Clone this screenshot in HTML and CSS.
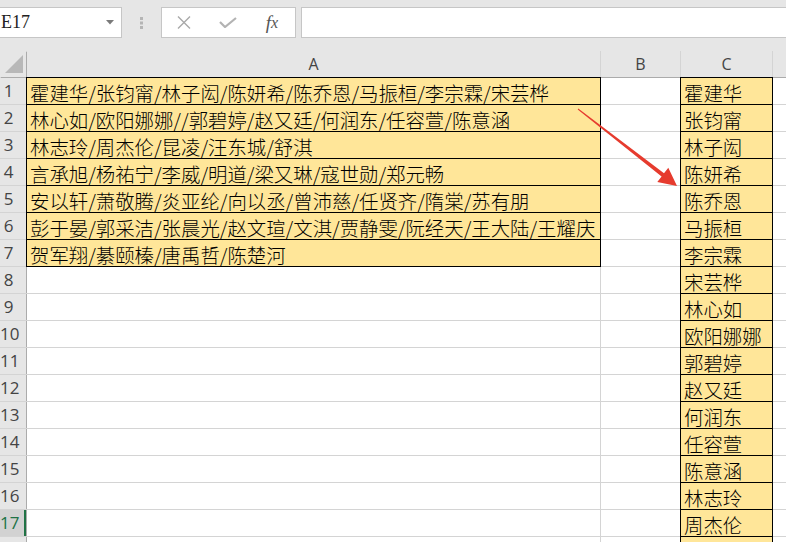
FILE: index.html
```html
<!DOCTYPE html>
<html lang="zh-CN">
<head>
  <meta charset="UTF-8">
  <title>Sheet1</title>
  <link rel="stylesheet" href="styles.css">
</head>

<body>
  <div class="toolbar">
    <div class="namebox">
      <span>E17</span>
      <svg class="drop" width="8" height="5" viewBox="0 0 8 5"><polygon points="0,0 8,0 4,4.5" fill="#7a7a7a"/></svg>
    </div>
    <div class="grip">
      <svg width="3" height="12" viewBox="0 0 3 12">
        <rect x="0" y="0" width="3" height="3" fill="#b5b5b5"/>
        <rect x="0" y="4.5" width="3" height="3" fill="#b5b5b5"/>
        <rect x="0" y="9" width="3" height="3" fill="#b5b5b5"/>
      </svg>
    </div>
    <div class="fbox">
      <span class="slot">
        <svg width="14" height="13" viewBox="0 0 14 13"><path d="M1 0.5 L13 12.5 M13 0.5 L1 12.5" stroke="#a9a9a9" stroke-width="1.4" fill="none"/></svg>
      </span>
      <span class="slot">
        <svg width="18" height="11" viewBox="0 0 18 11"><path d="M1 5 L6 10 L17 1" stroke="#b3b3b3" stroke-width="2.2" fill="none"/></svg>
      </span>
      <span class="slot fx">f<span class="x">x</span></span>
    </div>
    <div class="formula"></div>
  </div>

  <div class="sheet">
    <div class="corner">
      <svg width="26" height="26" viewBox="0 0 26 26"><polygon points="23,4 23,22 5,22" fill="#b8b8b8"/></svg>
    </div>
    <div class="colhead">A</div>
    <div class="colhead">B</div>
    <div class="colhead">C</div>
    <div class="colhead"></div>

    <div class="rh">1</div><div class="cell fill">霍建华/张钧甯/林子闳/陈妍希/陈乔恩/马振桓/李宗霖/宋芸桦</div><div class="cell"></div><div class="cell fill">霍建华</div><div class="cell"></div>
    <div class="rh">2</div><div class="cell fill">林心如/欧阳娜娜//郭碧婷/赵又廷/何润东/任容萱/陈意涵</div><div class="cell"></div><div class="cell fill">张钧甯</div><div class="cell"></div>
    <div class="rh">3</div><div class="cell fill">林志玲/周杰伦/昆凌/汪东城/舒淇</div><div class="cell"></div><div class="cell fill">林子闳</div><div class="cell"></div>
    <div class="rh">4</div><div class="cell fill">言承旭/杨祐宁/李威/明道/梁又琳/寇世勋/郑元畅</div><div class="cell"></div><div class="cell fill">陈妍希</div><div class="cell"></div>
    <div class="rh">5</div><div class="cell fill">安以轩/萧敬腾/炎亚纶/向以丞/曾沛慈/任贤齐/隋棠/苏有朋</div><div class="cell"></div><div class="cell fill">陈乔恩</div><div class="cell"></div>
    <div class="rh">6</div><div class="cell fill">彭于晏/郭采洁/张晨光/赵文瑄/文淇/贾静雯/阮经天/王大陆/王耀庆</div><div class="cell"></div><div class="cell fill">马振桓</div><div class="cell"></div>
    <div class="rh">7</div><div class="cell fill">贺军翔/綦颐榛/唐禹哲/陈楚河</div><div class="cell"></div><div class="cell fill">李宗霖</div><div class="cell"></div>
    <div class="rh">8</div><div class="cell"></div><div class="cell"></div><div class="cell fill">宋芸桦</div><div class="cell"></div>
    <div class="rh">9</div><div class="cell"></div><div class="cell"></div><div class="cell fill">林心如</div><div class="cell"></div>
    <div class="rh">10</div><div class="cell"></div><div class="cell"></div><div class="cell fill">欧阳娜娜</div><div class="cell"></div>
    <div class="rh">11</div><div class="cell"></div><div class="cell"></div><div class="cell fill">郭碧婷</div><div class="cell"></div>
    <div class="rh">12</div><div class="cell"></div><div class="cell"></div><div class="cell fill">赵又廷</div><div class="cell"></div>
    <div class="rh">13</div><div class="cell"></div><div class="cell"></div><div class="cell fill">何润东</div><div class="cell"></div>
    <div class="rh">14</div><div class="cell"></div><div class="cell"></div><div class="cell fill">任容萱</div><div class="cell"></div>
    <div class="rh">15</div><div class="cell"></div><div class="cell"></div><div class="cell fill">陈意涵</div><div class="cell"></div>
    <div class="rh">16</div><div class="cell"></div><div class="cell"></div><div class="cell fill">林志玲</div><div class="cell"></div>
    <div class="rh sel">17</div><div class="cell"></div><div class="cell"></div><div class="cell fill">周杰伦</div><div class="cell"></div>
    <div class="rh"></div><div class="cell"></div><div class="cell"></div><div class="cell fill"></div><div class="cell"></div>
  </div>

  <!-- red arrow drawn over the sheet -->
  <svg class="arrow" width="786" height="542" viewBox="0 0 786 542">
    <polygon points="577.7,109.4 578.3,108.6 664.0,173.3 668.3,167.8 677,186 657.3,182.0 661.6,176.5" fill="#e63b2e"/>
  </svg>
</body>
</html>
```

FILE: styles.css
```css
body {
  margin: 0;
  padding: 0;
  height: 542px;
  overflow: hidden;
  position: relative;
  background-color: #fff;
  font-family: "Liberation Sans", sans-serif;
  color: #000;
}

/* formula bar */
.toolbar {
  display: flex;
  align-items: flex-start;
  height: 51px;
  padding-top: 7px;
  box-sizing: border-box;
  background-color: #e6e6e6;
}

.namebox {
  display: flex;
  align-items: center;
  justify-content: space-between;
  width: 122px;
  height: 31px;
  padding: 0 7px 0 1px;
  box-sizing: border-box;
  background-color: #fff;
  border: 1px solid #c6c6c6;
  border-left: 0;
  font-family: "Liberation Serif", serif;
  font-size: 18px;
  color: #222;
}

.grip {
  display: flex;
  justify-content: center;
  width: 39px;
  padding-top: 10px;
}

.fbox {
  display: flex;
  align-items: center;
  width: 135px;
  height: 31px;
  box-sizing: border-box;
  background-color: #fff;
  border: 1px solid #c6c6c6;
}

.slot {
  display: flex;
  justify-content: center;
  align-items: center;
  width: 44px;
}

.fx {
  font-family: "Liberation Serif", serif;
  font-style: italic;
  font-size: 19px;
  color: #555;
}

.fx .x {
  font-size: 16px;
}

.formula {
  flex: 1;
  height: 31px;
  margin-left: 5px;
  box-sizing: border-box;
  background-color: #fff;
  border: 1px solid #c6c6c6;
  border-right: 0;
}

/* grid */
.sheet {
  display: grid;
  grid-template-columns: 26px 573px 79px 91px 1fr;
  grid-auto-rows: 26px;
  gap: 1px;
  background-color: #d4d4d4;
}

.corner {
  background-color: #e6e6e6;
  box-shadow: 1px 1px 0 #ababab;
}

.colhead {
  display: flex;
  justify-content: center;
  align-items: center;
  background-color: #e6e6e6;
  box-shadow: 0 1px 0 #ababab;
  font-family: "Open Sans", sans-serif;
  font-size: 16px;
  color: #444;
}

.rh {
  padding-right: 9px;
  background-color: #e6e6e6;
  box-shadow: 1px 0 0 #ababab;
  font-family: "Open Sans", sans-serif;
  font-size: 17px;
  line-height: 26px;
  text-align: center;
  color: #444;
}

.rh.sel {
  background-color: #d2d2d2;
  color: #217346;
  box-shadow: inset -2px 0 0 #217346, 1px 0 0 #ababab;
}

.cell {
  padding: 4px 0 0 3px;
  background-color: #fff;
  font-family: "Noto Sans CJK SC", sans-serif;
  font-weight: 300;
  font-size: 19.4px;
  line-height: 22px;
  white-space: nowrap;
}

.fill {
  background-color: #ffe699;
  box-shadow: 0 0 0 1px #000;
}

.arrow {
  position: absolute;
  left: 0;
  top: 0;
  pointer-events: none;
}
```
